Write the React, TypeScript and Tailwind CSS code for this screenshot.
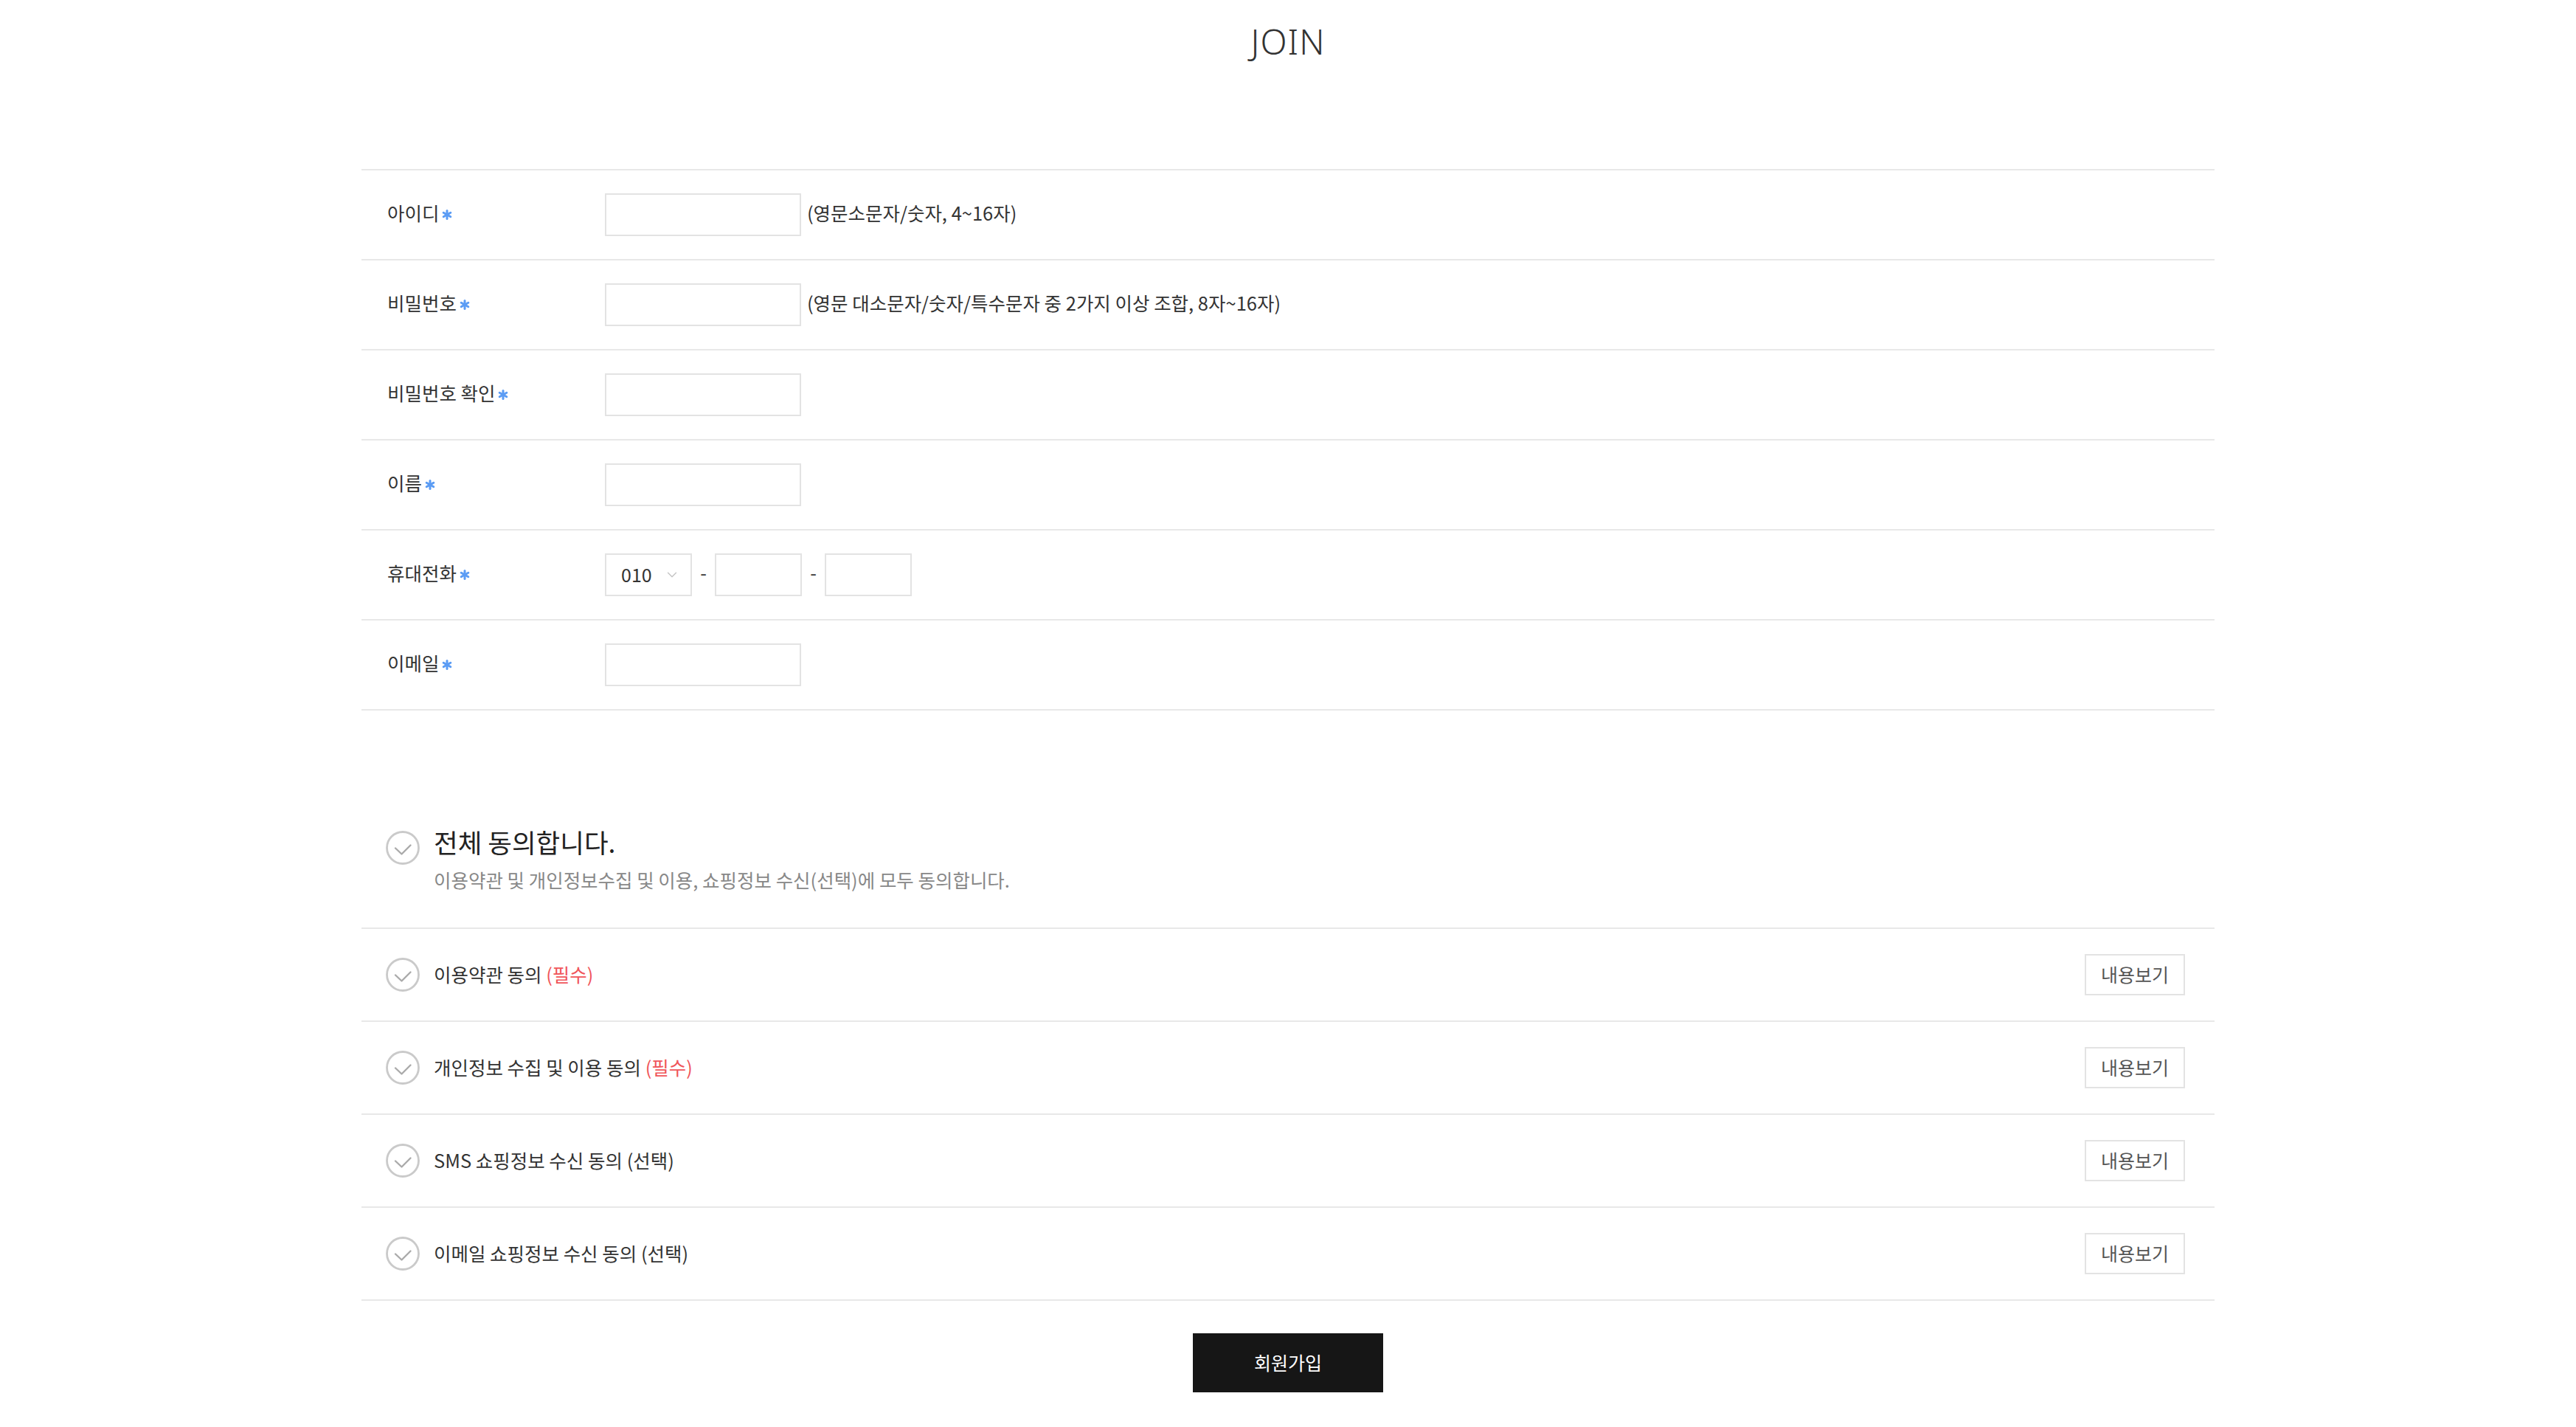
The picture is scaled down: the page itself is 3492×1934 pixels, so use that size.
import { ChevronDown } from 'lucide-react';

const FONT = "font-['Noto_Sans_CJK_KR','Noto_Sans',sans-serif]";

function Star() {
  return (
    <svg width="14" height="14" viewBox="0 0 14 14" className="ml-[4px] mt-[6px] shrink-0">
      <g stroke="#5b9cf4" strokeWidth="3" strokeLinecap="round">
        <line x1="7" y1="1.5" x2="7" y2="12.5" />
        <line x1="2.2" y1="4.2" x2="11.8" y2="9.8" />
        <line x1="2.2" y1="9.8" x2="11.8" y2="4.2" />
      </g>
    </svg>
  );
}

function CheckCircle() {
  return (
    <svg width="46" height="46" viewBox="0 0 46 46" className="shrink-0">
      <circle cx="23" cy="23" r="21.5" fill="white" stroke="#cacaca" strokeWidth="2.8" />
      <polyline points="13,23.5 21.5,31.5 33.5,19.5" fill="none" stroke="#aaaaaa" strokeWidth="2.4" strokeLinecap="round" strokeLinejoin="round" />
    </svg>
  );
}

function TextInput() {
  return <input type="text" className="w-[266px] h-[58px] border-2 border-[#e3e3e3] outline-none px-3 text-[25px]" />;
}

function FormRow({ label, children }: { label: string; children: React.ReactNode }) {
  return (
    <div className="flex items-center h-[122px] border-b-2 border-[#e8e8e8]">
      <div className="w-[330px] pl-[35px] pb-[6px] flex items-center text-[25.5px] text-[#333]">
        {label}
        <Star />
      </div>
      <div className="flex items-center">{children}</div>
    </div>
  );
}

const agreements = [
  { title: '이용약관 동의', required: true },
  { title: '개인정보 수집 및 이용 동의', required: true },
  { title: 'SMS 쇼핑정보 수신 동의 (선택)', required: false },
  { title: '이메일 쇼핑정보 수신 동의 (선택)', required: false },
];

export default function App() {
  return (
    <div className={`bg-white min-h-screen ${FONT}`}>
      <div className="w-[2512px] mx-auto">
        {/* Title */}
        <div className="h-[229px] pt-[26px] text-center">
          <h1 className="text-[47px] leading-[60px] font-light tracking-[1px] text-[#333] font-['Noto_Sans',sans-serif]">JOIN</h1>
        </div>

        {/* Form */}
        <div className="border-t-2 border-[#e8e8e8]">
          <FormRow label="아이디">
            <TextInput />
            <span className="ml-[8px] pb-[6px] text-[25.5px] text-[#333]">(영문소문자/숫자, 4~16자)</span>
          </FormRow>
          <FormRow label="비밀번호">
            <TextInput />
            <span className="ml-[8px] pb-[6px] text-[25.5px] text-[#333]">(영문 대소문자/숫자/특수문자 중 2가지 이상 조합, 8자~16자)</span>
          </FormRow>
          <FormRow label="비밀번호 확인">
            <TextInput />
          </FormRow>
          <FormRow label="이름">
            <TextInput />
          </FormRow>
          <FormRow label="휴대전화">
            <div className="w-[118px] h-[58px] border-2 border-[#e3e3e3] flex items-center justify-between pl-[20px] pr-[14px]">
              <span className="text-[25px] text-[#333]">010</span>
              <ChevronDown className="w-[22px] h-[22px] text-[#c4c4c4]" strokeWidth={1.5} />
            </div>
            <span className="w-[31px] pb-[6px] text-center text-[25px] text-[#333]">-</span>
            <input type="text" className="w-[118px] h-[58px] border-2 border-[#e3e3e3] outline-none" />
            <span className="w-[31px] pb-[6px] text-center text-[25px] text-[#333]">-</span>
            <input type="text" className="w-[118px] h-[58px] border-2 border-[#e3e3e3] outline-none" />
          </FormRow>
          <FormRow label="이메일">
            <TextInput />
          </FormRow>
        </div>

        {/* Agree all */}
        <div className="pt-[155px] pb-[48px] pl-[33px] flex gap-[19px]">
          <div className="pt-[8px]">
            <CheckCircle />
          </div>
          <div>
            <p className="text-[35.5px] leading-[46px] text-[#222]">전체 동의합니다.</p>
            <p className="mt-[11px] text-[25.5px] leading-[34px] text-[#888]">
              이용약관 및 개인정보수집 및 이용, 쇼핑정보 수신(선택)에 모두 동의합니다.
            </p>
          </div>
        </div>

        {/* Agreement list */}
        <div className="border-t-2 border-[#e8e8e8]">
          {agreements.map((a) => (
            <div key={a.title} className="flex items-center justify-between h-[126px] border-b-2 border-[#e8e8e8] pl-[33px] pr-[40px]">
              <div className="flex items-center gap-[19px]">
                <CheckCircle />
                <span className="text-[25.5px] text-[#333] pb-[2px]">
                  {a.title}
                  {a.required && <span className="text-[#f0555a]"> (필수)</span>}
                </span>
              </div>
              <button className="w-[136px] h-[56px] border-2 border-[#e3e3e3] text-[25px] text-[#555] bg-white">내용보기</button>
            </div>
          ))}
        </div>

        {/* Submit */}
        <div className="flex justify-center pt-[44px] pb-[48px]">
          <button className="w-[258px] h-[80px] bg-[#161616] text-white text-[25px]">회원가입</button>
        </div>
      </div>
    </div>
  );
}
